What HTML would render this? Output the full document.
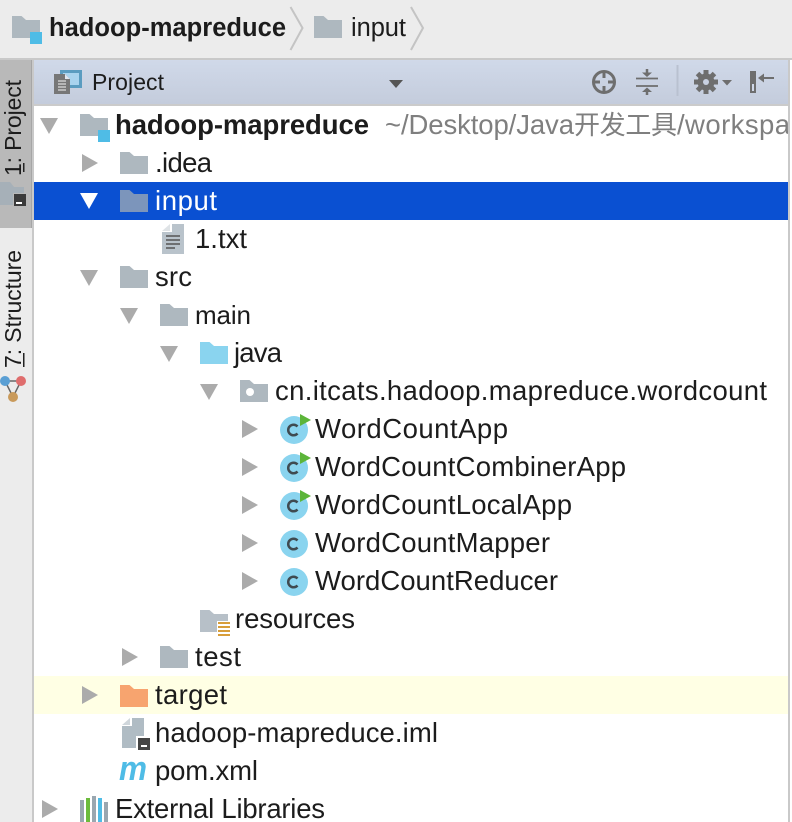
<!DOCTYPE html>
<html><head><meta charset="utf-8">
<style>
html,body{margin:0;padding:0;width:792px;height:822px;overflow:hidden;background:#fff}
svg{display:block}
text{font-family:"Liberation Sans","Noto Sans CJK SC",sans-serif;font-size:27.5px;fill:#1c1c1c}
.b{font-weight:bold}
.g{fill:#7f7f7f}
.w{fill:#fff}
.h{font-size:23px}
.t{font-size:25.5px}
</style></head><body>
<svg xmlns="http://www.w3.org/2000/svg" width="792" height="822" viewBox="0 0 792 822">
<defs>
<linearGradient id="hd" x1="0" y1="0" x2="0" y2="1"><stop offset="0" stop-color="#d0d9e9"/><stop offset="1" stop-color="#c4ccdc"/></linearGradient>
<clipPath id="cl"><rect x="34" y="106" width="754" height="716"/></clipPath>
<path id="f" d="M0 0H9.500L14 4H28V22H0Z"/>
<path id="ar" d="M0 0L16 9L0 18Z" fill="#ababab"/>
<path id="ad" d="M0 0H18L9 16Z" fill="#ababab"/>
<g id="c"><circle cx="14" cy="14" r="14" fill="#8ad4ef"/><path d="M17.500 10.500A5.300 5.300 0 1 0 17.500 17.500" fill="none" stroke="#3f4a50" stroke-width="2.500"/></g>
<path id="p" d="M20 -2L31 4L20 10Z" fill="#5cb53a"/>
</defs>

<!-- top bar -->
<rect width="792" height="58" fill="#ececec"/>
<rect y="58" width="792" height="2" fill="#c9c9c9"/>
<use href="#f" x="12" y="16" fill="#aeb8bf"/>
<rect x="30" y="32" width="12" height="12" fill="#4fbce6"/>
<text class="b t" x="49" y="36" textLength="237" lengthAdjust="spacing">hadoop-mapreduce</text>
<path d="M290.500 7L302.500 28L290.500 50" fill="none" stroke="#c4c4c4" stroke-width="2"/>
<use href="#f" x="314" y="16" fill="#aeb8bf"/>
<text class="t" x="351" y="36" textLength="55" lengthAdjust="spacing">input</text>
<path d="M411 7L423 28L411 50" fill="none" stroke="#c4c4c4" stroke-width="2"/>

<!-- left strip -->
<rect x="0" y="60" width="32" height="762" fill="#ececec"/>
<rect x="0" y="60" width="32" height="168" fill="#b9b9b9"/>
<rect x="31" y="60" width="1" height="168" fill="#a6a6a6"/>
<rect x="32" y="60" width="2" height="762" fill="#c9c9c9"/>
<text class="h" transform="translate(21,176) rotate(-90)" textLength="96" lengthAdjust="spacing">1: Project</text>
<rect x="23" y="163" width="1.500" height="9" fill="#222"/>
<path d="M0 182H10L14 187H24V205H0Z" fill="#a6b0b8"/>
<rect x="13" y="193" width="14" height="14" fill="#b9b9b9"/>
<rect x="14" y="194" width="12" height="12" fill="#3b3b3b"/>
<rect x="16" y="202" width="6" height="2" fill="#fff"/>
<text class="h" transform="translate(21,368) rotate(-90)" textLength="118" lengthAdjust="spacing">7: Structure</text>
<rect x="23" y="353" width="1.500" height="14" fill="#222"/>
<path d="M5 381L13 397L21 381Z" fill="none" stroke="#666" stroke-width="1.500"/>
<circle cx="13" cy="397" r="5" fill="#c99a5b"/>
<circle cx="5" cy="381" r="5" fill="#5a9fd4"/>
<circle cx="21" cy="381" r="5" fill="#df6d6d"/>

<!-- header -->
<rect x="34" y="60" width="754" height="44" fill="url(#hd)"/>
<rect x="34" y="104" width="754" height="2" fill="#cbcbcb"/>
<rect x="788" y="60" width="2" height="762" fill="#c9c9c9"/>
<rect x="790" y="60" width="2" height="762" fill="#fff"/>
<!-- project icon -->
<rect x="61.500" y="71.500" width="19" height="15" fill="#a9d3ee" stroke="#5b9cc0" stroke-width="3"/>
<path d="M54 74H65L70 79V94H54Z" fill="#777"/>
<path d="M65 74L70 79H65Z" fill="#dfe5ee"/>
<path d="M58 81H66M58 84H66M58 87H66M58 90H66" stroke="#dcdcdc" stroke-width="1.200"/>
<text class="h" x="92" y="90" textLength="72" lengthAdjust="spacing">Project</text>
<path d="M389 80H403L396 88Z" fill="#555"/>
<!-- target icon -->
<circle cx="604" cy="82" r="10.500" fill="none" stroke="#6e6e6e" stroke-width="3"/>
<path d="M604 71V78M604 86V93M593 82H600M608 82H615" stroke="#6e6e6e" stroke-width="3"/>
<!-- collapse icon -->
<path d="M636 78.500H658M636 86H658" stroke="#6e6e6e" stroke-width="1.800"/>
<path d="M647 69V74M647 91V95" stroke="#6e6e6e" stroke-width="2.500"/>
<path d="M642 72.500H652L647 77ZM642 92H652L647 87.500Z" fill="#6e6e6e"/>
<rect x="676.500" y="65" width="2" height="31" fill="#b9c1d0"/>
<!-- gear -->
<g fill="#6e6e6e"><circle cx="706" cy="82" r="8.500"/>
<path d="M703.500 70H708.500V94H703.500ZM694 79.500H718V84.500H694Z"/>
<path d="M703.500 70H708.500V94H703.500ZM694 79.500H718V84.500H694Z" transform="rotate(45 706 82)"/></g>
<circle cx="706" cy="82" r="3" fill="#c9d1e1"/>
<path d="M722 80H732L727 85.500Z" fill="#6e6e6e"/>
<!-- pin -->
<rect x="750" y="71" width="6" height="22" fill="#6e6e6e"/>
<rect x="752" y="84" width="2" height="7" fill="#d0d8e8"/>
<path d="M763 78H774" stroke="#6e6e6e" stroke-width="2"/>
<path d="M758 78L764 73.500V82.500Z" fill="#6e6e6e"/>

<!-- rows -->
<rect x="34" y="182" width="754" height="38" fill="#0a50d2"/>
<rect x="34" y="676" width="754" height="38" fill="#ffffe4"/>

<!-- root -->
<use href="#ad" x="40" y="118"/>
<use href="#f" x="80" y="114" fill="#aeb8bf"/>
<rect x="98" y="130" width="12" height="12" fill="#4fbce6"/>
<text class="b" x="115" y="134" textLength="254" lengthAdjust="spacing">hadoop-mapreduce</text>
<g clip-path="url(#cl)">
<text class="g" x="385" y="134" textLength="189" lengthAdjust="spacing">~/Desktop/Java</text>
<text class="g" style="font-size:26px" x="574" y="134" textLength="103" lengthAdjust="spacing">开发工具</text>
<text class="g" x="677" y="134" textLength="113" lengthAdjust="spacing">/workspa</text>
</g>

<use href="#ar" x="82" y="154"/>
<use href="#f" x="120" y="152" fill="#aeb8bf"/>
<text x="155" y="172" textLength="57" lengthAdjust="spacing">.idea</text>

<path d="M80 193H98L89 209Z" fill="#fff"/>
<use href="#f" x="120" y="190" fill="#7c95bb"/>
<text class="w" x="155" y="210" textLength="62" lengthAdjust="spacing">input</text>

<path d="M172 224H184V254H162V232H172Z" fill="#b9c3cb"/>
<path d="M170 224V231H162Z" fill="#dfe3e6"/>
<path d="M166 236H180M166 240H180M166 244H180M166 248H175" stroke="#555" stroke-width="1.500"/>
<text x="195" y="248" textLength="52" lengthAdjust="spacing">1.txt</text>

<use href="#ad" x="80" y="270"/>
<use href="#f" x="120" y="266" fill="#aeb8bf"/>
<text x="155" y="286" textLength="37" lengthAdjust="spacing">src</text>

<use href="#ad" x="120" y="308"/>
<use href="#f" x="160" y="304" fill="#aeb8bf"/>
<text style="font-size:26px" x="195" y="324" textLength="56" lengthAdjust="spacing">main</text>

<use href="#ad" x="160" y="346"/>
<use href="#f" x="200" y="342" fill="#8ad4ef"/>
<text x="234" y="362" textLength="48" lengthAdjust="spacing">java</text>

<use href="#ad" x="200" y="384"/>
<use href="#f" x="240" y="380" fill="#aeb8bf"/>
<circle cx="250" cy="392" r="4" fill="#fff"/>
<text x="275" y="400" textLength="492" lengthAdjust="spacing">cn.itcats.hadoop.mapreduce.wordcount</text>

<use href="#ar" x="242" y="420"/>
<use href="#c" x="280" y="416"/><use href="#p" x="280" y="416"/>
<text x="315" y="438" textLength="193" lengthAdjust="spacing">WordCountApp</text>

<use href="#ar" x="242" y="458"/>
<use href="#c" x="280" y="454"/><use href="#p" x="280" y="454"/>
<text x="315" y="476" textLength="311" lengthAdjust="spacing">WordCountCombinerApp</text>

<use href="#ar" x="242" y="496"/>
<use href="#c" x="280" y="492"/><use href="#p" x="280" y="492"/>
<text x="315" y="514" textLength="257" lengthAdjust="spacing">WordCountLocalApp</text>

<use href="#ar" x="242" y="534"/>
<use href="#c" x="280" y="530"/>
<text x="315" y="552" textLength="235" lengthAdjust="spacing">WordCountMapper</text>

<use href="#ar" x="242" y="572"/>
<use href="#c" x="280" y="568"/>
<text x="315" y="590" textLength="243" lengthAdjust="spacing">WordCountReducer</text>

<use href="#f" x="200" y="610" fill="#b7c0c8"/>
<rect x="217" y="621" width="14" height="16" fill="#fff"/>
<path d="M218 623H230M218 627H230M218 631H230M218 635H230" stroke="#d89e3a" stroke-width="2"/>
<text x="235" y="628" textLength="120" lengthAdjust="spacing">resources</text>

<use href="#ar" x="122" y="648"/>
<use href="#f" x="160" y="646" fill="#aeb8bf"/>
<text x="195" y="666" textLength="46" lengthAdjust="spacing">test</text>

<use href="#ar" x="82" y="686"/>
<use href="#f" x="120" y="685" fill="#f7a46f"/>
<text x="155" y="704" textLength="72" lengthAdjust="spacing">target</text>

<path d="M132 718H144V748H122V726H132Z" fill="#b0bcc4"/>
<path d="M130 718V725H122Z" fill="#cfd6db"/>
<rect x="136" y="736" width="16" height="16" fill="#fff"/>
<rect x="138" y="738" width="12" height="12" fill="#444"/>
<rect x="141" y="745" width="6" height="2" fill="#fff"/>
<text x="155" y="742" textLength="283" lengthAdjust="spacing">hadoop-mapreduce.iml</text>

<text x="119" y="780" style="font-size:34px;font-style:italic;fill:#4fbce6;font-weight:bold" textLength="28" lengthAdjust="spacingAndGlyphs">m</text>
<text x="155" y="780" textLength="103" lengthAdjust="spacing">pom.xml</text>

<use href="#ar" x="42" y="800"/>
<rect x="80" y="800" width="4" height="22" fill="#9aa7b0"/>
<rect x="86" y="798" width="4" height="24" fill="#6cbb3c"/>
<rect x="92" y="796" width="4" height="26" fill="#9aa7b0"/>
<rect x="98" y="798" width="4" height="24" fill="#4fbce6"/>
<rect x="104" y="802" width="4" height="20" fill="#9aa7b0"/>
<text x="115" y="818" textLength="210" lengthAdjust="spacing">External Libraries</text>
</svg>
</body></html>
